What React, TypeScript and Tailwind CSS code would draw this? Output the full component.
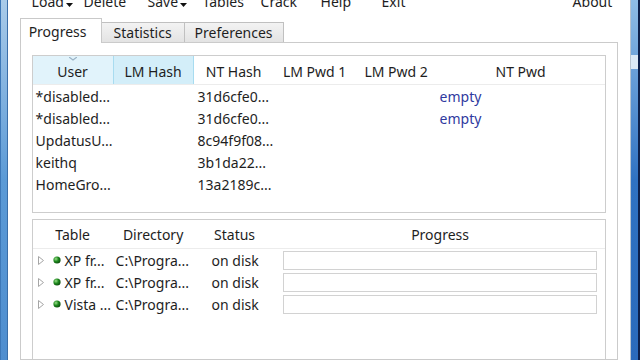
import React from "react";

const font = { fontFamily: '"Noto Sans", "Open Sans", sans-serif' };

function Arrow() {
  return (
    <svg width="7" height="4" viewBox="0 0 7 4" className="ml-[2px] mt-[10px]">
      <path d="M0 0 L7 0 L3.5 4 Z" fill="#111" />
    </svg>
  );
}

const users = [
  ["*disabled...", "31d6cfe0...", "empty"],
  ["*disabled...", "31d6cfe0...", "empty"],
  ["UpdatusU...", "8c94f9f08...", ""],
  ["keithq", "3b1da22...", ""],
  ["HomeGro...", "13a2189c...", ""],
];

const tables = [
  ["XP fr...", "C:\\Progra...", "on disk"],
  ["XP fr...", "C:\\Progra...", "on disk"],
  ["Vista ...", "C:\\Progra...", "on disk"],
];

function Dot() {
  return (
    <svg width="8" height="8" viewBox="0 0 8 8">
      <defs>
        <radialGradient id="g" cx="0.35" cy="0.35" r="0.7">
          <stop offset="0" stopColor="#9be08a" />
          <stop offset="0.5" stopColor="#1f8a1f" />
          <stop offset="1" stopColor="#0a4a0a" />
        </radialGradient>
      </defs>
      <circle cx="4" cy="4" r="3.6" fill="url(#g)" />
    </svg>
  );
}

function Tri() {
  return (
    <svg width="6" height="9" viewBox="0 0 6 9">
      <path d="M0.5 0.5 L5.5 4.5 L0.5 8.5 Z" fill="none" stroke="#a6a6a6" strokeWidth="1" />
    </svg>
  );
}

export default function App() {
  return (
    <div className="w-[640px] h-[360px] flex overflow-hidden bg-white text-[#1e1e1e]" style={font}>
      {/* left frame */}
      <div className="w-[8px] h-full flex">
        <div className="w-[1px] bg-[#3d78b8]" />
        <div className="flex-1 bg-gradient-to-b from-[#a9cbe9] via-[#5b9ad6] to-[#4f8ecf]" />
        <div className="w-[1px] bg-[#3a6ea8]" />
      </div>

      {/* client */}
      <div className="flex-1 flex flex-col bg-white">
        {/* menu */}
        <div className="h-[10px]">
          <div className="flex items-start text-[14px] leading-[18px] -mt-[7px] pl-[24px]">
            <div className="flex w-[52px]"><span>Load</span><Arrow /></div>
            <div className="w-[64px]">Delete</div>
            <div className="flex w-[55px]"><span>Save</span><Arrow /></div>
            <div className="w-[58px]">Tables</div>
            <div className="w-[60px]">Crack</div>
            <div className="w-[61px]">Help</div>
            <div className="w-[191px]">Exit</div>
            <div>About</div>
          </div>
        </div>

        {/* tabs */}
        <div className="h-[32px] flex items-end pl-[12px]">
          <div className="relative z-10 h-[25px] w-[82px] border border-b-0 border-[#c9c9c9] bg-white text-[14px] flex items-center justify-center -mb-[1px] pr-[6px]">
            Progress
          </div>
          <div className="h-[20px] w-[83px] border border-l-0 border-b-0 border-[#c0c0c0] bg-gradient-to-b from-[#f3f3f3] to-[#e3e3e3] text-[14px] flex items-center justify-center">
            Statistics
          </div>
          <div className="h-[20px] w-[99px] border border-l-0 border-b-0 border-[#c0c0c0] bg-gradient-to-b from-[#f3f3f3] to-[#e3e3e3] text-[14px] flex items-center justify-center">
            Preferences
          </div>
        </div>

        {/* panel */}
        <div className="ml-[12px] mr-[12px] flex-1 border border-[#cbcbcb] pt-[12px] px-[11px] flex flex-col">
          {/* list 1 */}
          <div className="h-[158px] border border-[#cdcdcd] bg-white flex flex-col">
            <div className="h-[29px] flex text-[14px] border-b border-[#ececec]">
              <div className="w-[80px] relative bg-[#e1f3fb] flex items-center justify-center pt-[3px]">
                <svg width="8" height="4" viewBox="0 0 8 4" className="absolute top-[1px] left-[36px]">
                  <path d="M0 0 L4 3 L8 0" fill="none" stroke="#9ab3c6" strokeWidth="1.2" />
                </svg>
                User
              </div>
              <div className="w-[81px] bg-[#d3eef9] border-x border-[#a8dcf0] flex items-center justify-center pt-[3px]">LM Hash</div>
              <div className="w-[80px] flex items-center justify-center pt-[3px]">NT Hash</div>
              <div className="w-[82px] flex items-center justify-center pt-[3px]">LM Pwd 1</div>
              <div className="w-[81px] flex items-center justify-center pt-[3px]">LM Pwd 2</div>
              <div className="w-[168px] flex items-center justify-center pt-[3px]">NT Pwd</div>
            </div>
            <div>
              {users.map((u, i) => (
                <div key={i} className="h-[22px] flex items-center text-[14px]">
                  <div className="w-[161px] pl-[3px]">{u[0]}</div>
                  <div className="w-[243px] pl-[4px]">{u[1]}</div>
                  <div className="pl-[3px] text-[#2f3aa0]">{u[2]}</div>
                </div>
              ))}
            </div>
          </div>

          {/* list 2 */}
          <div className="mt-[6px] flex-1 border border-[#cdcdcd] border-b-0 bg-white flex flex-col">
            <div className="h-[29px] flex text-[14px] border-b border-[#ececec]">
              <div className="w-[80px] flex items-center justify-center">Table</div>
              <div className="w-[81px] flex items-center justify-center">Directory</div>
              <div className="w-[82px] flex items-center justify-center">Status</div>
              <div className="flex-1 flex items-center justify-center">Progress</div>
            </div>
            <div>
              {tables.map((t, i) => (
                <div key={i} className="h-[22px] flex items-center text-[14px]">
                  <div className="w-[83px] flex items-center pl-[5px]">
                    <Tri />
                    <span className="ml-[9px]"><Dot /></span>
                    <span className="ml-[4px]">{t[0]}</span>
                  </div>
                  <div className="w-[96px]">{t[1]}</div>
                  <div className="w-[71px]">{t[2]}</div>
                  <div className="w-[314px] h-[19px] border border-[#d2d2d2] bg-white" />
                </div>
              ))}
            </div>
          </div>
        </div>
      </div>

      {/* right frame */}
      <div className="w-[11px] h-full flex">
        <div className="w-[1px] bg-[#b8c4d0]" />
        <div className="w-[7px] bg-gradient-to-b from-[#8fbde6] via-[#2f72c2] to-[#2a6abb] relative">
          <div className="absolute top-[55px] left-0 right-0 h-[14px] bg-[#dbe9f6]" />
        </div>
        <div className="flex-1 bg-[#0c1f4a]" />
      </div>
    </div>
  );
}
